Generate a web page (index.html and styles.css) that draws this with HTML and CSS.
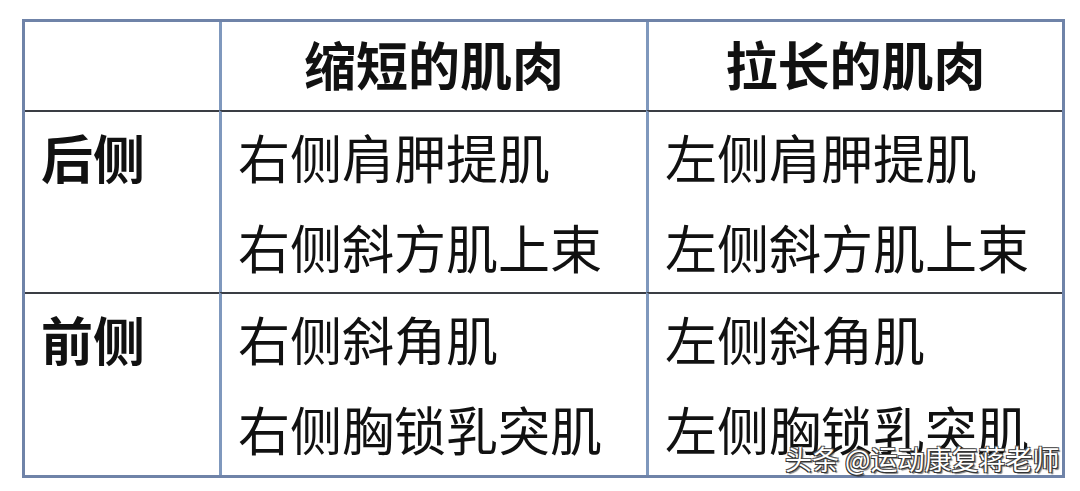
FILE: index.html
```html
<!DOCTYPE html>
<html lang="zh">
<head>
<meta charset="utf-8">
<link rel="stylesheet" href="styles.css">
</head>
<body>
<div class="page">
  <div class="grid">
    <div class="cell head corner"></div>
    <div class="cell head vline">缩短的肌肉</div>
    <div class="cell head vline">拉长的肌肉</div>

    <div class="cell label hline">后侧</div>
    <div class="cell body hline vline">右侧肩胛提肌<br>右侧斜方肌上束</div>
    <div class="cell body hline vline">左侧肩胛提肌<br>左侧斜方肌上束</div>

    <div class="cell label hline">前侧</div>
    <div class="cell body hline vline">右侧斜角肌<br>右侧胸锁乳突肌</div>
    <div class="cell body hline vline">左侧斜角肌<br>左侧胸锁乳突肌</div>
  </div>
  <div class="watermark">头条 @运动康复蒋老师</div>
</div>
</body>
</html>
```
FILE: styles.css
```css
html, body {
  margin: 0;
  padding: 0;
  background: #ffffff;
}
body {
  font-family: "Noto Sans CJK SC", "Noto Sans", sans-serif;
  color: #111111;
  width: 1080px;
  height: 491px;
  overflow: hidden;
}
.page {
  position: relative;
  width: 1080px;
  height: 491px;
  padding: 19px 0 0 22px;
  box-sizing: border-box;
}
.grid {
  display: grid;
  grid-template-columns: 194px 427px 416px;
  grid-template-rows: 88px 182px 183px;
  width: 1043px;
  box-sizing: border-box;
  border: 3px solid #6f83a8;
}
.cell {
  box-sizing: border-box;
  font-size: 52px;
}
.vline {
  border-left: 3px solid #7f98bd;
}
.hline {
  border-top: 2px solid #3a3d44;
}
.head {
  font-weight: 700;
  text-align: center;
  line-height: 84px;
  padding-bottom: 4px;
}
.label {
  font-weight: 700;
  line-height: 90px;
  padding-left: 16px;
}
.body {
  font-weight: 400;
  line-height: 90px;
  padding-left: 16px;
  white-space: nowrap;
}
.watermark {
  position: absolute;
  left: 785px;
  top: 441px;
  font-size: 27px;
  line-height: 36px;
  color: #ffffff;
  white-space: nowrap;
  text-shadow: 1px 1px 0 #333, -1px 1px 0 #333, 1px -1px 0 #555, -1px -1px 0 #555, 2px 2px 1px rgba(0,0,0,0.5);
}
```
